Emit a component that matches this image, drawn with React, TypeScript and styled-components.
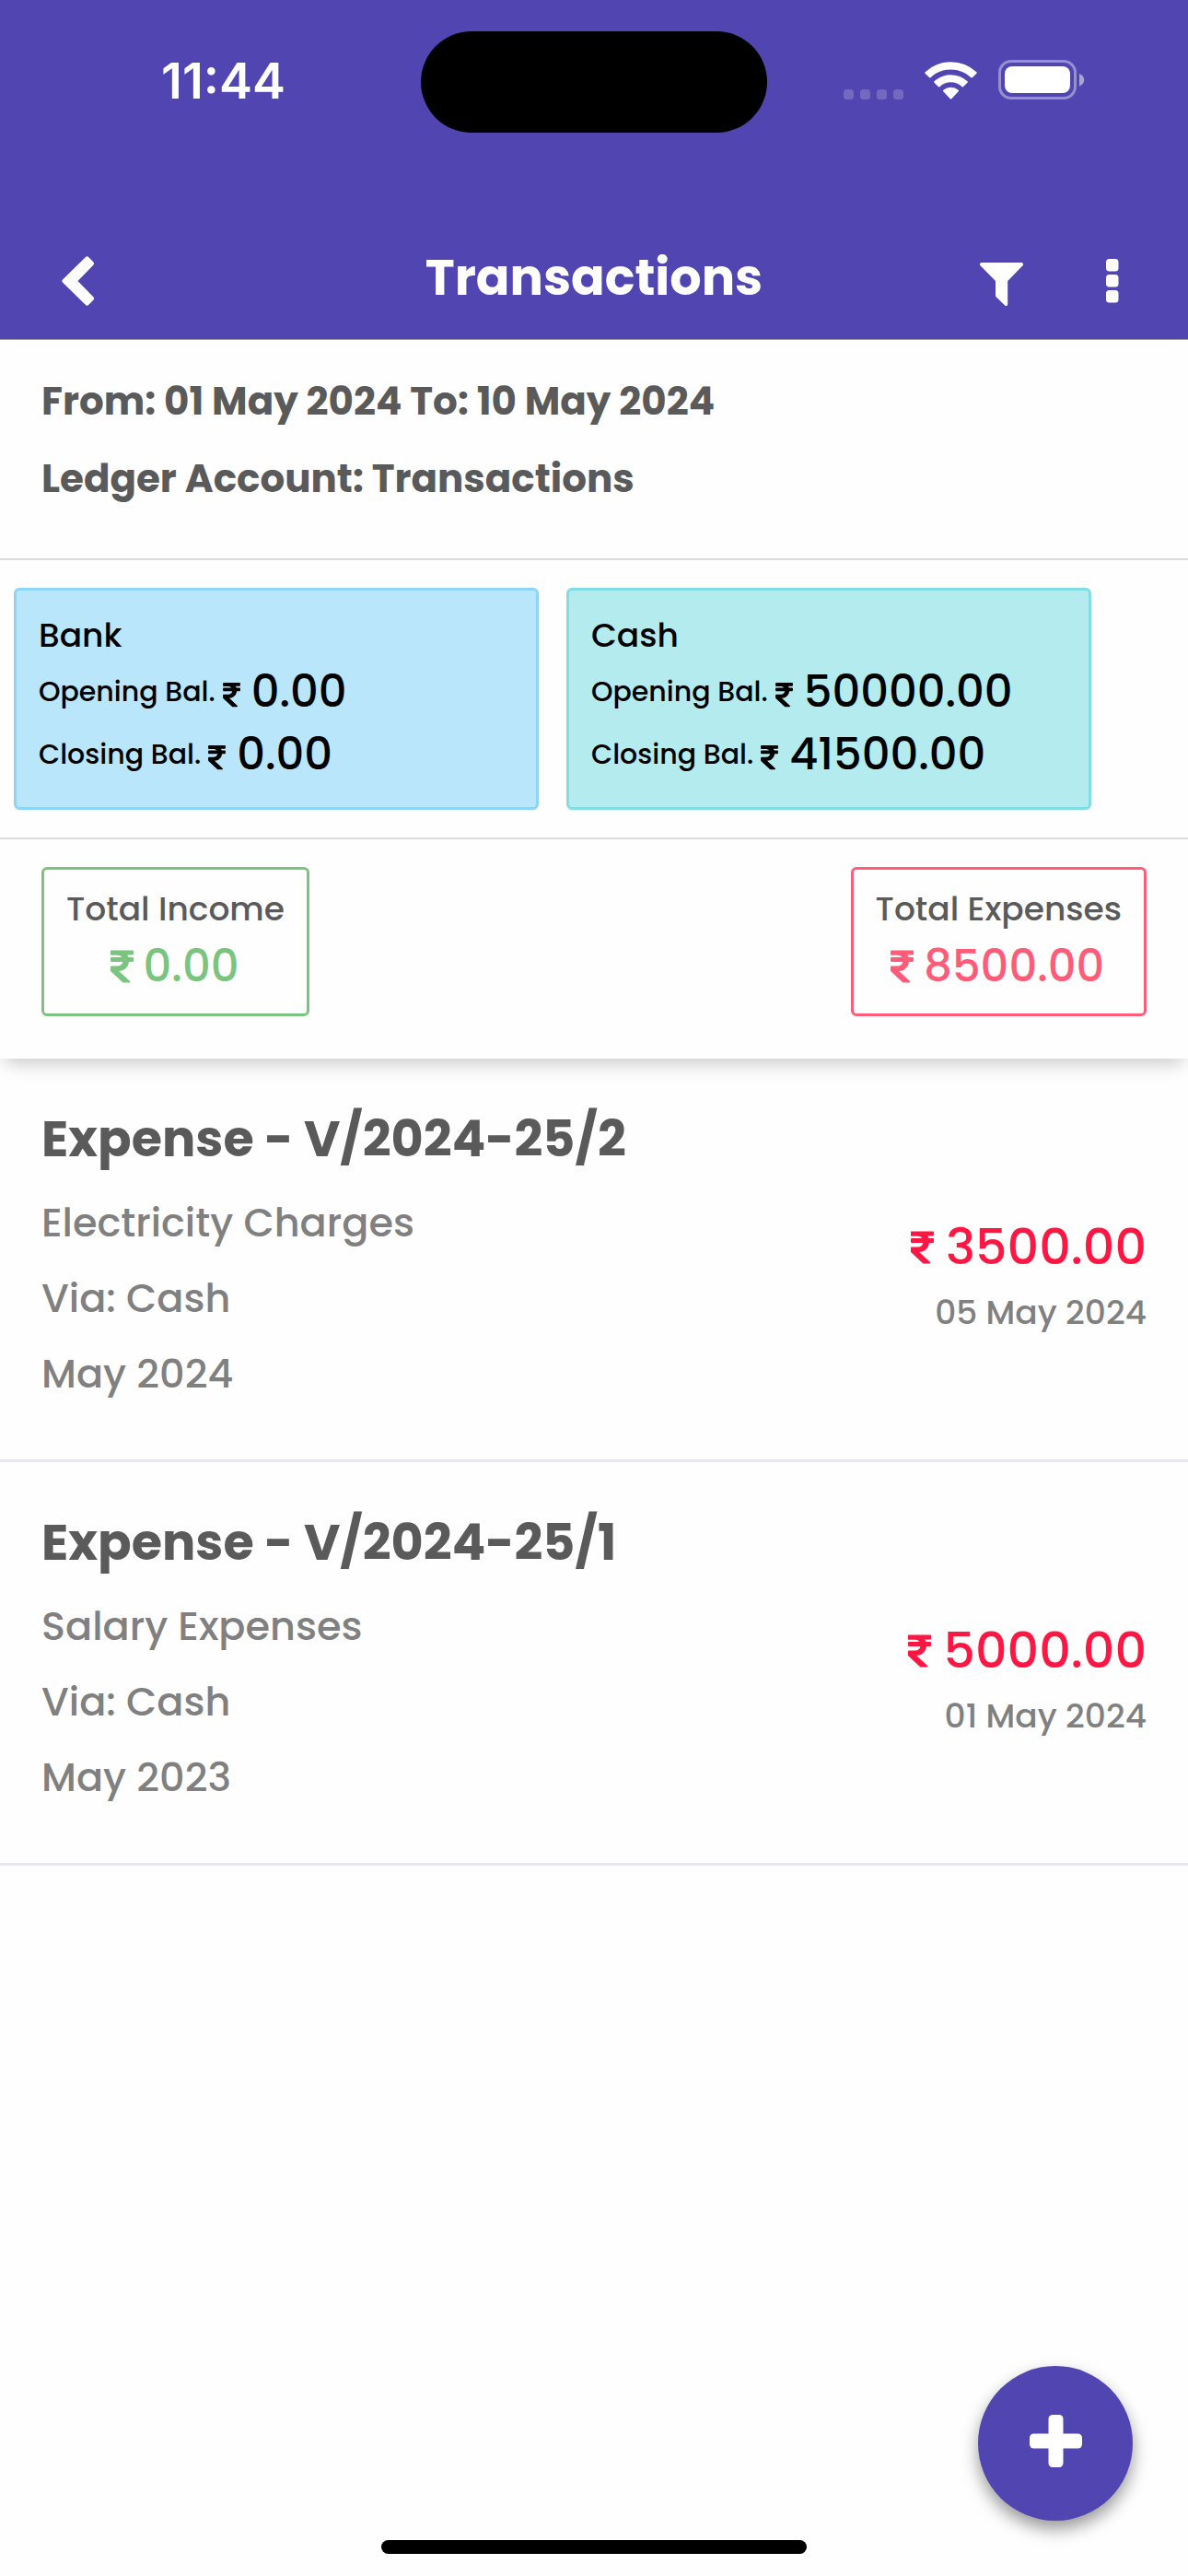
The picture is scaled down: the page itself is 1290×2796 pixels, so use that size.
import React from "react";
import styled, { createGlobalStyle } from "styled-components";
import { FaRupeeSign } from "react-icons/fa";

const GlobalStyle = createGlobalStyle`
  *, *::before, *::after { box-sizing: border-box; }
  body {
    margin: 0;
    background: #fefefe;
    color: #5a5a5a;
    font-family: "Poppins", "Inter", sans-serif;
    font-weight: 500;
  }
  h1, h2, p, ul { margin: 0; padding: 0; }
  button { border: 0; padding: 0; background: none; color: inherit; cursor: pointer; }
  svg { display: block; flex: none; }
`;

const Screen = styled.div`
  display: flex;
  flex-direction: column;
  min-height: 100vh;
`;

const AppBar = styled.header`
  background: #5145b1;
  border-bottom: 1px solid #9c9ca6;
  color: #fff;
`;

const StatusBar = styled.div`
  display: grid;
  grid-template-columns: 1fr 376px 1fr;
  align-items: center;
  padding: 34px 0 90px;
`;

const Clock = styled.time`
  padding: 0 0 2px 28px;
  font: 600 54px/64px "Inter", sans-serif;
  text-align: center;
`;

const Island = styled.div`
  height: 110px;
  border-radius: 55px;
  background: #000;
`;

const StatusIcons = styled.div`
  display: flex;
  justify-content: flex-end;
  align-items: flex-end;
  gap: 23px;
  padding: 0 112px 6px 0;
`;

const NavBar = styled.nav`
  display: grid;
  grid-template-columns: 1fr auto 1fr;
  align-items: center;
  height: 134px;
  padding: 0 49px;
`;

const Title = styled.h1`
  font-size: 54px;
  font-weight: 700;
  line-height: 81px;
`;

const IconButton = styled.button`
  display: flex;
  align-items: center;
  justify-content: center;
  width: 66px;
  height: 66px;
`;

const NavSide = styled.div<{ $end?: boolean }>`
  display: flex;
  justify-content: ${(p) => (p.$end ? "flex-end" : "flex-start")};
  align-items: center;
  gap: 55px;
  padding-top: 7px;
`;

const Summary = styled.section`
  box-shadow: 0 12px 18px -6px rgba(0, 0, 0, 0.2);
`;

const Period = styled.div`
  display: grid;
  gap: 21px;
  padding: 35px 45px 55px;
  border-bottom: 2px solid #dcdcdc;
  font-size: 42px;
  font-weight: 700;
  line-height: 63px;
`;

const Accounts = styled.div`
  display: grid;
  grid-template-columns: 1fr 1fr;
  gap: 30px;
  padding: 30px 105px 30px 15px;
  border-bottom: 2px solid #dcdcdc;
  color: #000;
`;

const AccountCard = styled.article<{ $fill: string; $line: string }>`
  padding: 22px 24px 23px;
  border: 3px solid ${(p) => p.$line};
  border-radius: 6px;
  background: ${(p) => p.$fill};
`;

const AccountName = styled.h2`
  font-size: 36px;
  font-weight: 500;
  line-height: 54px;
`;

const Balance = styled.p`
  display: flex;
  align-items: center;
  font-size: 30px;
  line-height: 68px;
`;

const BalanceSign = styled(FaRupeeSign)`
  width: 19px;
  height: 30px;
  margin: 6px 12px 0 8px;
`;

const BalanceValue = styled.span`
  font-size: 48px;
`;

const RupeeSign = styled(FaRupeeSign)`
  width: 25px;
  height: 42px;
`;

const Totals = styled.div`
  display: flex;
  justify-content: space-between;
  padding: 30px 45px 46px;
`;

const TotalBox = styled.div<{ $tone: string }>`
  padding: 16px 24px;
  border: 3px solid ${(p) => p.$tone};
  border-radius: 6px;
  text-align: center;
`;

const TotalLabel = styled.p`
  font-size: 36px;
  line-height: 54px;
`;

const TotalValue = styled.p<{ $tone: string }>`
  display: flex;
  align-items: center;
  justify-content: center;
  gap: 11px;
  padding-right: 2px;
  color: ${(p) => p.$tone};
  font-size: 48px;
  line-height: 70px;
`;

const Entries = styled.ul`
  flex: 1;
  list-style: none;
`;

const Entry = styled.li`
  display: flex;
  justify-content: space-between;
  align-items: center;
  padding: 47px 45px 52px;
  border-bottom: 3px solid #e8e7ef;
  color: #808080;
`;

const EntryTitle = styled.h2`
  margin-bottom: 9px;
  color: #5a5a5a;
  font-size: 54px;
  font-weight: 700;
  line-height: 81px;
`;

const EntryLine = styled.p`
  font-size: 43px;
  line-height: 82px;
`;

const EntryFigures = styled.div`
  display: grid;
  gap: 4px;
  padding-top: 37px;
  text-align: right;
`;

const EntryAmount = styled.p`
  display: flex;
  align-items: center;
  justify-content: flex-end;
  gap: 13px;
  color: #ff1744;
  font-size: 54px;
  line-height: 81px;
`;

const EntryDate = styled.p`
  font-size: 36px;
  line-height: 54px;
`;

const AddButton = styled.button`
  position: fixed;
  right: 60px;
  bottom: 60px;
  display: flex;
  align-items: center;
  justify-content: center;
  width: 168px;
  height: 168px;
  padding-bottom: 5px;
  border-radius: 50%;
  background: #5145b1;
  box-shadow: 0 9px 18px rgba(0, 0, 0, 0.4);
`;

const HomeIndicator = styled.div`
  width: 462px;
  height: 15px;
  margin: 0 auto 24px;
  border-radius: 8px;
  background: #000;
`;

const SignalDots = () => (
  <svg width="65" height="11" viewBox="0 0 65 11" fill="#fff" fillOpacity="0.2" aria-hidden="true">
    {[0, 18, 36, 54].map((x) => (
      <rect key={x} x={x} width="11" height="11" rx="3.5" />
    ))}
  </svg>
);

const Wifi = () => (
  <svg width="57" height="42" viewBox="0 0 57 42" aria-hidden="true">
    <g fill="#fff" stroke="#fff" strokeWidth="2" strokeLinejoin="round">
      <path d="M1.3 13.1a39.6 39.6 0 0 1 54.4 0l-4.4 4.3a33.4 33.4 0 0 0-45.6 0Z" />
      <path d="M11.2 23a25.4 25.4 0 0 1 34.6 0l-4.4 4.4a18.9 18.9 0 0 0-25.8 0Z" />
      <path d="M21 32.6a11.4 11.4 0 0 1 15 0l-7.5 7.9Z" />
    </g>
  </svg>
);

const Battery = () => (
  <svg width="94" height="43" viewBox="0 0 94 43" fill="#fff" aria-hidden="true">
    <rect x="1.5" y="1.5" width="82" height="40" rx="12.5" fill="none" stroke="#fff" strokeOpacity="0.4" strokeWidth="3" />
    <rect x="7" y="7" width="71" height="29" rx="8" />
    <path d="M88 15c7 2.5 7 11 0 13.5Z" fillOpacity="0.5" />
  </svg>
);

const Chevron = () => (
  <svg width="42" height="54" viewBox="-6 0 42 54" aria-hidden="true">
    <path
      d="M3 27 27.5 3l5 5L14 27l18.5 19-5 5Z"
      fill="#fff"
      stroke="#fff"
      strokeWidth="5"
      strokeLinejoin="round"
    />
  </svg>
);

const Funnel = () => (
  <svg width="47" height="55" viewBox="0 -8 47 55" fill="#fff" aria-hidden="true">
    <path d="M2 0h43c2 0 2.700 2.200 1.300 3.600L30.200 20v25.200c0 1.700-1.900 2.400-3 1.200L17.600 37.200c-.4-.4-.6-.8-.6-1.400V20L.7 3.600C-.7 2.200 0 0 2 0Z" />
  </svg>
);

const MoreDots = () => (
  <svg width="14" height="48" viewBox="0 0 14 48" fill="#fff" aria-hidden="true">
    {[0, 17, 34].map((y) => (
      <rect key={y} y={y} width="13.5" height="13.5" rx="3.5" />
    ))}
  </svg>
);

const Plus = () => (
  <svg width="57" height="57" viewBox="0 0 57 57" fill="#fff" aria-hidden="true">
    <rect x="20.5" width="16" height="57" rx="4.5" />
    <rect y="20.5" width="57" height="16" rx="4.5" />
  </svg>
);

const accounts = [
  { name: "Bank", opening: "0.00", closing: "0.00", fill: "#b9e6fb", line: "#8ad5f8" },
  { name: "Cash", opening: "50000.00", closing: "41500.00", fill: "#b3ebee", line: "#80dde3" },
];

const totals = [
  { label: "Total Income", value: "0.00", tone: "#7bc47f" },
  { label: "Total Expenses", value: "8500.00", tone: "#ff5c7a" },
];

const entries = [
  {
    title: "Expense - V/2024-25/2",
    lines: ["Electricity Charges", "Via: Cash", "May 2024"],
    amount: "3500.00",
    date: "05 May 2024",
  },
  {
    title: "Expense - V/2024-25/1",
    lines: ["Salary Expenses", "Via: Cash", "May 2023"],
    amount: "5000.00",
    date: "01 May 2024",
  },
];

export default function App() {
  return (
    <Screen>
      <GlobalStyle />
      <AppBar>
        <StatusBar>
          <Clock>11:44</Clock>
          <Island />
          <StatusIcons>
            <SignalDots />
            <Wifi />
            <Battery />
          </StatusIcons>
        </StatusBar>
        <NavBar>
          <NavSide>
            <IconButton type="button" aria-label="Back">
              <Chevron />
            </IconButton>
          </NavSide>
          <Title>Transactions</Title>
          <NavSide $end>
            <IconButton type="button" aria-label="Filter">
              <Funnel />
            </IconButton>
            <IconButton type="button" aria-label="More options">
              <MoreDots />
            </IconButton>
          </NavSide>
        </NavBar>
      </AppBar>

      <Summary>
        <Period>
          <p>From: 01 May 2024 To: 10 May 2024</p>
          <p>Ledger Account: Transactions</p>
        </Period>
        <Accounts>
          {accounts.map((a) => (
            <AccountCard key={a.name} $fill={a.fill} $line={a.line}>
              <AccountName>{a.name}</AccountName>
              <Balance>
                Opening Bal.
                <BalanceSign />
                <BalanceValue>{a.opening}</BalanceValue>
              </Balance>
              <Balance>
                Closing Bal.
                <BalanceSign />
                <BalanceValue>{a.closing}</BalanceValue>
              </Balance>
            </AccountCard>
          ))}
        </Accounts>
        <Totals>
          {totals.map((t) => (
            <TotalBox key={t.label} $tone={t.tone}>
              <TotalLabel>{t.label}</TotalLabel>
              <TotalValue $tone={t.tone}>
                <RupeeSign />
                {t.value}
              </TotalValue>
            </TotalBox>
          ))}
        </Totals>
      </Summary>

      <Entries>
        {entries.map((e) => (
          <Entry key={e.title}>
            <div>
              <EntryTitle>{e.title}</EntryTitle>
              {e.lines.map((line) => (
                <EntryLine key={line}>{line}</EntryLine>
              ))}
            </div>
            <EntryFigures>
              <EntryAmount>
                <RupeeSign />
                {e.amount}
              </EntryAmount>
              <EntryDate>{e.date}</EntryDate>
            </EntryFigures>
          </Entry>
        ))}
      </Entries>

      <AddButton type="button" aria-label="Add transaction">
        <Plus />
      </AddButton>
      <HomeIndicator />
    </Screen>
  );
}
